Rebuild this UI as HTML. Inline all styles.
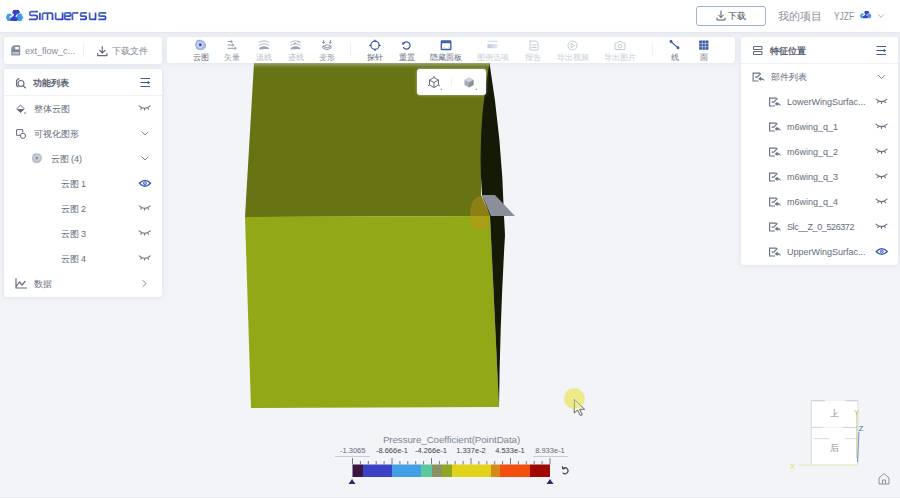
<!DOCTYPE html>
<html><head><meta charset="utf-8">
<style>
*{margin:0;padding:0;box-sizing:border-box}
html,body{width:900px;height:498px;overflow:hidden;background:#f3f4f7;font-family:"Liberation Sans",sans-serif;color:#646b7a}
.a{position:absolute}
.hdr{left:0;top:0;width:900px;height:32px;background:#fff;box-shadow:0 1px 2px rgba(180,190,210,.35)}
.panel{background:#fff;border-radius:3px;box-shadow:0 0 5px 1px rgba(218,224,235,.75)}
.t9{font-size:9px;white-space:nowrap;line-height:10px}
.t8{font-size:8px;white-space:nowrap;line-height:9px}
.b{font-weight:bold;color:#596071}
.sep{height:1px;background:#edf0f4}
svg.a{overflow:visible}
.ic{fill:none;stroke:#646b7a;stroke-width:1;stroke-linecap:round;stroke-linejoin:round}
.dis{color:#c9ced7}
.bl{color:#3d4452}
</style></head><body>

<!-- header -->
<div class="a hdr"></div>
<!-- 3D shape -->
<svg class="a" style="left:0;top:0" width="900" height="498" viewBox="0 0 900 498">
  <polygon points="254,63 490,63 486,100 481,170 481,195 490,216 245,217" fill="#687313"/>
  <polygon points="245,217 490,216 499,407 251,408" fill="#93a816"/>
  <ellipse cx="480" cy="213.5" rx="10" ry="17" fill="#c8901a" fill-opacity="0.4"/>
  <path d="M489.5,63 Q502,140 504,216 L505,235 Q500,320 499,407 L490,216 L482,195 Q477,130 489.5,63 Z" fill="#141a05"/>
  <polygon points="482,195 495,195 515,216 491,216" fill="#8a8f9a"/>
</svg>
<svg class="a" style="left:0;top:0" width="120" height="32" viewBox="0 0 120 32">
  <polygon points="5.9,17.4 7.6,13.8 11,13.8 12.7,17.4 11,21 7.6,21" fill="#3d9ae8"/>
  <polygon points="16.4,17.3 18.1,13.5 21.4,13.5 23.1,17.3 21.4,21 18.1,21" fill="#3d9ae8"/>
  <polygon points="12.2,12.6 13.4,9.9 18.7,9.9 20.1,12.6 18.4,13.6 16.6,14.6 15.4,16.8 17.3,17.6 18,19.2 17,21 11.3,21 10.3,19.2 11.4,17.4 13.2,16.2 14.2,14.2 12.9,13.8" fill="#3940c9"/>
  <polygon points="8.7,17.6 11.3,15 11.9,17.6" fill="#fff"/>
  <defs><linearGradient id="lgS" x1="0" y1="0" x2="1" y2="1"><stop offset="0" stop-color="#4d72b8"/><stop offset="1" stop-color="#2b36d2"/></linearGradient></defs>
  <g fill="none" stroke="url(#lgS)" stroke-width="1.75" stroke-linecap="butt" stroke-linejoin="round">
    <path d="M38,11.6 H31.3 Q29.8,11.6 29.8,13.1 V13.9 Q29.8,15.4 31.3,15.4 H35.8 Q37.3,15.4 37.3,16.9 V17.8 Q37.3,19.3 35.8,19.3 H29"/>
    <path d="M39.9,12.7 V20" stroke="#3848c8"/>
    <path d="M42.5,20 V14.4 Q42.5,13.1 43.8,13.1 H51.2 Q52.5,13.1 52.5,14.4 V20 M47.5,13.1 V20"/>
    <path d="M55.6,12.6 V18 Q55.6,19.3 56.9,19.3 H62.6 V12.6"/>
    <path d="M70.6,16.2 H64.7 M70.6,19.3 H66 Q64.7,19.3 64.7,18 V14.2 Q64.7,12.9 66,12.9 H69.3 Q70.6,12.9 70.6,14.2 V16.2"/>
    <path d="M72.4,20 V14.2 Q72.4,12.9 73.7,12.9 H78.3"/>
    <path d="M86.8,12.9 H81.9 Q80.6,12.9 80.6,14.2 V14.9 Q80.6,16.2 81.9,16.2 H84.9 Q86.2,16.2 86.2,17.5 V18 Q86.2,19.3 84.9,19.3 H80"/>
    <path d="M89.6,12.6 V18 Q89.6,19.3 90.9,19.3 H95.5 V12.6"/>
    <path d="M106.2,12.9 H100.3 Q99,12.9 99,14.2 V14.9 Q99,16.2 100.3,16.2 H104.3 Q105.6,16.2 105.6,17.5 V18 Q105.6,19.3 104.3,19.3 H98.3"/>
  </g>
</svg>
<!-- header right -->
<div class="a" style="left:695.5px;top:6px;width:70.5px;height:19.5px;border:1px solid #9fb0d6;border-radius:3px"></div>
<svg class="a ic" style="left:716px;top:10px;stroke:#4d5462" width="12" height="12" viewBox="0 0 12 12"><path d="M5,1 V7.5 M2.5,5 L5,7.5 L7.5,5 M1,8 V10 H9 V8"/></svg>
<div class="a t9 bl" style="left:728px;top:11px;font-size:9px">下载</div>
<div class="a" style="left:778px;top:10px;font-size:10.5px;white-space:nowrap;color:#8a909c;line-height:12px">我的项目</div>
<div class="a" style="left:833.5px;top:10px;font-size:10.5px;white-space:nowrap;color:#8a909c;line-height:12px;transform:scaleX(0.8);transform-origin:0 0">YJZF</div>
<svg class="a" style="left:0;top:0" width="900" height="32" viewBox="0 0 900 32"><g transform="translate(860,11) scale(0.66) translate(-5.9,-9.9)">
  <polygon points="5.9,17.4 7.6,13.8 11,13.8 12.7,17.4 11,21 7.6,21" fill="#3d9ae8"/>
  <polygon points="16.4,17.3 18.1,13.5 21.4,13.5 23.1,17.3 21.4,21 18.1,21" fill="#3d9ae8"/>
  <polygon points="12.2,12.6 13.4,9.9 18.7,9.9 20.1,12.6 18.4,13.6 16.6,14.6 15.4,16.8 17.3,17.6 18,19.2 17,21 11.3,21 10.3,19.2 11.4,17.4 13.2,16.2 14.2,14.2 12.9,13.8" fill="#3940c9"/>
  <polygon points="8.7,17.6 11.3,15 11.9,17.6" fill="#fff"/>
</g></svg>
<svg class="a ic" style="left:878px;top:14px;stroke:#a9aeb8" width="8" height="5" viewBox="0 0 8 5"><path d="M0.5,0.8 L3,3.3 L5.5,0.8"/></svg>

<!-- left top panel -->
<div class="a panel" style="left:4px;top:37px;width:158px;height:27px"></div>
<svg class="a" style="left:11px;top:45px" width="10" height="11" viewBox="0 0 10 11"><path d="M2.6,0.3 H7.8 Q9.2,0.3 9.2,1.7 V9.3 Q9.2,10.6 7.8,10.6 H1.4 Q0.2,10.6 0.2,9.3 V2.7 Z" fill="#8891a1"/><rect x="4.2" y="2" width="3.6" height="2.4" fill="#fff"/><path d="M1.6,6 H8" stroke="#5f6878" stroke-width="0.9"/><rect x="1.6" y="6.8" width="6.4" height="2.6" fill="#b9c0cb"/></svg>
<div class="a t9" style="left:25px;top:46px;color:#858c98">ext_flow_c...</div>
<div class="a" style="left:82.5px;top:43px;width:1px;height:14px;background:#eef0f3"></div>
<svg class="a ic" style="left:97px;top:46px;stroke:#646b7a;stroke-width:1.2" width="11" height="11" viewBox="0 0 11 11"><path d="M5.3,0.5 V7 M2.6,4.4 L5.3,7 L8,4.4 M0.7,7.5 V9.6 H9.9 V7.5"/></svg>
<div class="a t9" style="left:112px;top:46px;color:#7d8492">下载文件</div>

<!-- left function list panel -->
<div class="a panel" style="left:4px;top:69px;width:158px;height:228px"></div>
<div class="a sep" style="left:4px;top:95px;width:158px"></div>
<svg class="a ic" style="left:15px;top:77px;stroke-width:1.1" width="12" height="12" viewBox="0 0 12 12"><path d="M4,1.5 L1.5,3.5 V8.5 L3,10"/><circle cx="6" cy="6.5" r="3"/><path d="M8.2,8.7 L10.5,11"/></svg>
<div class="a t9 b" style="left:33px;top:78px">功能列表</div>
<svg class="a" style="left:140px;top:77px" width="11" height="11" viewBox="0 0 11 11"><path d="M0.5,1.5 H10 M0.5,9.5 H10" stroke="#4d5b85" stroke-width="1"/><path d="M0.5,5.5 H8.5" stroke="#2f4fb0" stroke-width="1"/><path d="M7.8,3.7 L10.3,5.5 L7.8,7.3 Z" fill="#2f4fb0"/></svg>

<!-- rows -->
<svg class="a" style="left:16px;top:103.5px" width="12" height="12" viewBox="0 0 12 12"><path d="M4.5,1 L8.3,4.8 L4.5,8.6 L0.7,4.8 Z" fill="none" stroke="#646b7a" stroke-width="1"/><path d="M0.9,5 H8.1 L4.5,8.5 Z" fill="#646b7a"/><circle cx="9" cy="9" r="0.8" fill="#646b7a"/></svg>
<div class="a t9" style="left:34px;top:104px">整体云图</div>

<svg class="a ic" style="left:16px;top:129px;stroke-width:1" width="12" height="12" viewBox="0 0 12 12"><path d="M4.5,6.3 H0.6 V0.6 H6.8 V3.2"/><circle cx="7" cy="6.8" r="2.6"/></svg>
<div class="a t9" style="left:34px;top:129px">可视化图形</div>

<svg class="a" style="left:31px;top:152px" width="12" height="12" viewBox="0 0 12 12"><path d="M3,1.8 Q6.5,0.5 9.3,2.3 Q11.5,4.5 10.6,7.8 Q9,11.3 5.6,11.3 Q1.6,11 1.1,7.2 Q0.8,3.2 3,1.8 Z" fill="#b7bfcb"/><path d="M4,4 Q6.5,3 8.2,4.6 Q9,7 7,8.4 Q4.5,9 3.5,7 Q3,5 4,4 Z" fill="none" stroke="#e6eaf0" stroke-width="0.7"/><circle cx="5.8" cy="6.1" r="1.3" fill="#8a94a6"/></svg>
<div class="a t9" style="left:50.5px;top:154px">云图 (4)</div>

<div class="a t9" style="left:60.5px;top:179px">云图 1</div>
<div class="a t9" style="left:60.5px;top:204px">云图 2</div>
<div class="a t9" style="left:60.5px;top:229px">云图 3</div>
<div class="a t9" style="left:60.5px;top:254px">云图 4</div>

<svg class="a ic" style="left:15px;top:278px;stroke-width:1.2" width="12" height="11" viewBox="0 0 12 11"><path d="M1,0.5 V10 H11.5 M1.5,8 L4.5,4 L7,7 L10,3.5"/></svg>
<div class="a t9" style="left:34px;top:279px">数据</div>

<!-- eyes & chevrons left -->
<svg class="a" style="left:0;top:0" width="170" height="300" viewBox="0 0 170 300">
  <defs>
    <g id="eyec"><path d="M0,0 Q5.5,5 11,0 M2.5,2 L1.6,3.4 M5.5,2.6 V4.3 M8.5,2 L9.4,3.4" fill="none" stroke="#6a7386" stroke-width="1.1" stroke-linecap="round"/></g>
    <g id="eyeo"><path d="M0.2,3.5 Q5.75,-2.3 11.3,3.5 Q5.75,9.3 0.2,3.5 Z" fill="none" stroke="#3a5eb5" stroke-width="1.4"/><circle cx="5.75" cy="3.5" r="1.5" fill="none" stroke="#3a5eb5" stroke-width="1"/><circle cx="5.75" cy="3.5" r="0.6" fill="#3a5eb5"/></g>
    <g id="chd"><path d="M0,0 L3,3 L6,0" fill="none" stroke="#7d8492" stroke-width="1" stroke-linecap="round" stroke-linejoin="round"/></g>
  </defs>
  <use href="#eyec" x="139.2" y="105.8"/>
  <use href="#chd" x="142" y="132"/>
  <use href="#chd" x="142" y="157"/>
  <use href="#eyeo" x="139.2" y="179.8"/>
  <use href="#eyec" x="139.2" y="205.8"/>
  <use href="#eyec" x="139.2" y="230.8"/>
  <use href="#eyec" x="139.2" y="255.8"/>
  <path d="M143,280.5 L146,283.5 L143,286.5" fill="none" stroke="#7d8492" stroke-width="1" stroke-linecap="round" stroke-linejoin="round"/>
</svg>

<!-- toolbar -->
<div class="a panel" style="left:167px;top:37px;width:568px;height:26px"></div>
<div class="a" style="left:350px;top:43px;width:1px;height:12px;background:#eef0f3"></div>
<div class="a" style="left:652px;top:43px;width:1px;height:12px;background:#eef0f3"></div>
<div class="a t8" style="left:192.5px;top:52.5px">云图</div>
<div class="a t8" style="left:224px;top:52.5px;color:#9aa0aa">矢量</div>
<div class="a t8 dis" style="left:256px;top:52.5px;color:#b5bac3">流线</div>
<div class="a t8 dis" style="left:287.5px;top:52.5px;color:#b5bac3">迹线</div>
<div class="a t8" style="left:319px;top:52.5px;color:#9aa0aa">变形</div>
<div class="a t8" style="left:367px;top:52.5px">探针</div>
<div class="a t8" style="left:398.5px;top:52.5px">重置</div>
<div class="a t8" style="left:430px;top:52.5px">隐藏面板</div>
<div class="a t8 dis" style="left:477px;top:52.5px">图例选项</div>
<div class="a t8 dis" style="left:525px;top:52.5px">报告</div>
<div class="a t8 dis" style="left:556.5px;top:52.5px">导出视频</div>
<div class="a t8 dis" style="left:604px;top:52.5px">导出图片</div>
<div class="a t8" style="left:670.5px;top:52.5px">线</div>
<div class="a t8" style="left:699.8px;top:52.5px">面</div>

<svg class="a" style="left:0;top:0" width="740" height="70" viewBox="0 0 740 70">
  <!-- 云图 -->
  <path d="M197.5,40.3 Q201,39.5 203.5,41.5 Q206.5,44 205.5,47 Q204,50 200,49.8 Q196,49.5 195.7,46 Q195.3,41.5 197.5,40.3 Z" fill="#a8bbe6" stroke="#7f98d4" stroke-width="0.6"/>
  <path d="M198,42.5 Q201.5,41.5 203,44 Q203.5,47 200.5,47.5 Q197.5,47.5 197.5,45 Z" fill="none" stroke="#e8eef8" stroke-width="0.7"/>
  <circle cx="200.3" cy="44.8" r="1.2" fill="#2a3fc0"/>
  <!-- 矢量 -->
  <g fill="none" stroke="#8e97a8" stroke-width="1" stroke-linecap="round">
    <path d="M228,41.5 H232 M231,40.4 L232.2,41.5 L231,42.6 M228,45 H233.5 M232.4,43.9 L233.6,45 L232.4,46.1 M228,48.3 H236 M234.9,47.2 L236.1,48.3 L234.9,49.4"/>
  </g>
  <!-- 流线 -->
  <g fill="none" stroke="#a9b0be" stroke-width="0.9" stroke-linecap="round">
    <path d="M259,42.3 Q264,39.3 269,42.3 M259,45.3 Q264,42 269,45.3"/>
  </g>
  <path d="M258.8,49.6 Q259.8,46 264.5,46.2 Q268.5,46.6 269.2,49.2 Q264,48.9 258.8,49.6 Z" fill="#9aa3b3"/>
  <!-- 迹线 -->
  <g fill="none" stroke="#a9b0be" stroke-width="0.9" stroke-linecap="round">
    <path d="M290.5,42.3 Q295.5,39.3 300.5,42.3 M290.5,45.3 Q295.5,42 300.5,45.3"/>
  </g>
  <circle cx="295" cy="43.4" r="0.9" fill="#8e97a8"/>
  <circle cx="298.8" cy="41.8" r="0.8" fill="#8e97a8"/>
  <path d="M290.3,49.6 Q291.3,46 296,46.2 Q300,46.6 300.7,49.2 Q295.5,48.9 290.3,49.6 Z" fill="#9aa3b3"/>
  <!-- 变形 -->
  <g fill="none" stroke="#8e97a8" stroke-width="1" stroke-linecap="round" stroke-linejoin="round">
    <path d="M323.6,40.3 V43.3 M322.5,42.2 L323.6,43.4 L324.7,42.2 M330.4,40.3 V43.3 M329.3,42.2 L330.4,43.4 L331.5,42.2"/>
    <path d="M323,46.3 L327,44.6 L331,46.3 V48 L327,49.8 L323,48 Z M323,46.3 L327,48 L331,46.3"/>
  </g>
  <!-- 探针 -->
  <g fill="none" stroke="#3a58a8" stroke-width="1.2" stroke-linecap="round">
    <circle cx="375" cy="45.3" r="4.1"/>
    <path d="M375,40 V41.2 M375,49.4 V50.6 M369.7,45.3 H370.9 M379.1,45.3 H380.3"/>
  </g>
  <!-- 重置 -->
  <g fill="none" stroke="#3a58a8" stroke-width="1.2" stroke-linecap="round">
    <path d="M403.4,43.6 A3.6,3.6 0 1 1 403.6,47.6"/>
  </g>
  <path d="M402.2,41.8 L405,43.4 L402.6,45.2 Z" fill="#3a58a8"/>
  <!-- 隐藏面板 -->
  <g fill="none" stroke="#3a58a8" stroke-width="1.3">
    <rect x="441.3" y="40.9" width="9.5" height="8.6" rx="0.6"/>
  </g>
  <path d="M441.3,42.2 H450.8" stroke="#3a58a8" stroke-width="2"/>
  <path d="M443,47.3 H445 M448,47.3 H449.3" stroke="#a0b0d8" stroke-width="0.6"/>
  <!-- 图例选项 -->
  <defs><linearGradient id="lg1" x1="0" x2="1"><stop offset="0" stop-color="#b8c6e0"/><stop offset="1" stop-color="#e8ecf3"/></linearGradient></defs>
  <path d="M487.5,41.3 H497.5" stroke="#c5cdd9" stroke-width="0.9"/>
  <rect x="487.5" y="44.2" width="10" height="4" fill="url(#lg1)"/>
  <!-- 报告 -->
  <g fill="none" stroke="#c5cad3" stroke-width="1">
    <path d="M530,41 H536 L538,43 V50 H530 Z M531.5,45 H536.5 M531.5,47.5 H536.5"/>
  </g>
  <!-- 导出视频 -->
  <g fill="none" stroke="#c5cad3" stroke-width="1">
    <circle cx="572.5" cy="45.5" r="4.5"/>
    <path d="M571.2,43.3 L574.4,45.5 L571.2,47.7 Z"/>
  </g>
  <!-- 导出图片 -->
  <g fill="none" stroke="#c5cad3" stroke-width="1">
    <path d="M615,43 H617.5 L618.5,41.5 H621.5 L622.5,43 H625 V49.5 H615 Z"/>
    <circle cx="620" cy="46.2" r="1.8"/>
  </g>
  <!-- 线 -->
  <g stroke="#3a58a8" stroke-width="1.1" fill="#3a58a8">
    <path d="M671,41.5 L678,47.8"/>
    <circle cx="671" cy="41.5" r="0.9"/>
    <circle cx="678" cy="47.8" r="0.9"/>
  </g>
  <!-- 面 -->
  <g>
    <rect x="699.2" y="40.6" width="9.2" height="9.2" rx="0.6" fill="#3a58a8"/>
    <path d="M699.2,43.7 H708.4 M699.2,46.7 H708.4 M702.3,40.6 V49.8 M705.3,40.6 V49.8" stroke="#dfe6f5" stroke-width="0.6"/>
  </g>
</svg>

<!-- right panel -->
<div class="a panel" style="left:741px;top:37px;width:157px;height:228px"></div>
<div class="a sep" style="left:741px;top:63px;width:157px"></div>
<svg class="a ic" style="left:752px;top:45px;stroke-width:1.1" width="12" height="12" viewBox="0 0 12 12"><rect x="1.5" y="1.5" width="8.5" height="3" rx="0.8"/><rect x="1.5" y="6.5" width="8.5" height="3" rx="0.8"/></svg>
<div class="a t9 b" style="left:770px;top:46px">特征位置</div>
<svg class="a" style="left:876px;top:45px" width="11" height="11" viewBox="0 0 11 11"><path d="M0.5,1.5 H10 M0.5,9.5 H10" stroke="#4d5b85" stroke-width="1"/><path d="M0.5,5.5 H8.5" stroke="#2f4fb0" stroke-width="1"/><path d="M7.8,3.7 L10.3,5.5 L7.8,7.3 Z" fill="#2f4fb0"/></svg>

<svg class="a" style="left:0;top:0" width="900" height="270" viewBox="0 0 900 270">
  <defs>
    <g id="part"><path d="M7.5,0.6 H0.6 V8.5 H6 M2.6,4.6 H4.8 L8.4,0.8" fill="none" stroke="#6a7386" stroke-width="1.15"/><path d="M5.6,6.4 L8.6,4 V5.4 Q11.2,5.4 12,8.6 Q10.6,7 8.6,7.2 V8.6 Z" fill="#6a7386"/></g>
    <g id="eyec2"><path d="M0,0 Q5.5,5 11,0 M2.5,2 L1.6,3.4 M5.5,2.6 V4.3 M8.5,2 L9.4,3.4" fill="none" stroke="#6a7386" stroke-width="1.1" stroke-linecap="round"/></g>
    <g id="eyeo2"><path d="M0.2,3.5 Q5.75,-2.3 11.3,3.5 Q5.75,9.3 0.2,3.5 Z" fill="none" stroke="#3a5eb5" stroke-width="1.4"/><circle cx="5.75" cy="3.5" r="1.5" fill="none" stroke="#3a5eb5" stroke-width="1"/><circle cx="5.75" cy="3.5" r="0.6" fill="#3a5eb5"/></g>
  </defs>
  <use href="#part" x="752.5" y="72.5"/>
  <use href="#part" x="769" y="97.5"/>
  <use href="#part" x="769" y="122.5"/>
  <use href="#part" x="769" y="147.5"/>
  <use href="#part" x="769" y="172.5"/>
  <use href="#part" x="769" y="197.5"/>
  <use href="#part" x="769" y="222.5"/>
  <use href="#part" x="769" y="247.5"/>
  <path d="M878.5,75.5 L881.5,78.5 L884.5,75.5" fill="none" stroke="#7d8492" stroke-width="1" stroke-linecap="round" stroke-linejoin="round"/>
  <use href="#eyec2" x="876" y="99.2"/>
  <use href="#eyec2" x="876" y="124.2"/>
  <use href="#eyec2" x="876" y="149.2"/>
  <use href="#eyec2" x="876" y="174.2"/>
  <use href="#eyec2" x="876" y="199.2"/>
  <use href="#eyec2" x="876" y="224.2"/>
  <use href="#eyeo2" x="876" y="248"/>
</svg>
<div class="a t9" style="left:771px;top:72px">部件列表</div>
<div class="a t9" style="left:787px;top:97px">LowerWingSurfac...</div>
<div class="a t9" style="left:787px;top:122px">m6wing_q_1</div>
<div class="a t9" style="left:787px;top:147px">m6wing_q_2</div>
<div class="a t9" style="left:787px;top:172px">m6wing_q_3</div>
<div class="a t9" style="left:787px;top:197px">m6wing_q_4</div>
<div class="a t9" style="left:787px;top:222px;letter-spacing:-0.4px">Slc__Z_0_526372</div>
<div class="a t9" style="left:787px;top:247px">UpperWingSurfac...</div>

<!-- overlay box -->
<div class="a" style="left:417px;top:69px;width:69px;height:26px;background:#fff;border-radius:3px;box-shadow:0 0 3px rgba(218,224,235,.7)"></div>
<div class="a" style="left:451px;top:77px;width:1px;height:9px;background:#eef0f3"></div>
<svg class="a" style="left:0;top:0" width="500" height="100" viewBox="0 0 500 100">
  <g fill="none" stroke="#646b7a" stroke-width="1">
    <path d="M434,77.5 L438.5,80 V85 L434,87.5 L429.5,85 V80 Z M429.5,80 L434,82.5 L438.5,80 M434,82.5 V87.5"/>
    <path d="M434,76 V77.5 M428,86 L429.5,85 M440,86 L438.5,85"/>
  </g>
  <path d="M442,88 L442,90 L440,90 Z" fill="#a0a6b0"/>
  <path d="M469,77.5 L473.5,80 V85 L469,87.5 L464.5,85 V80 Z" fill="#a4aab4"/>
  <path d="M469,77.5 L473.5,80 L469,82.5 L464.5,80 Z" fill="#d0d4da"/>
  <path d="M469,82.5 L473.5,80 V85 L469,87.5 Z" fill="#8a909c"/>
  <path d="M477,88 L477,90 L475,90 Z" fill="#a0a6b0"/>
</svg>

<!-- colorbar -->
<div class="a" style="left:351.5px;top:434px;width:200px;text-align:center;font-size:9.8px;white-space:nowrap;color:#7d8492;line-height:11px;letter-spacing:-0.1px">Pressure_Coefficient(PointData)</div>
<div class="a t8" style="left:340px;top:446px;font-size:7.5px;color:#646b7a">-1.3065</div>
<div class="a" style="left:335px;top:456px;width:35px;height:1px;background:#c8ccd4"></div>
<div class="a t8" style="left:375px;top:446px;font-size:7.5px;color:#3d4452;width:34px;text-align:center">-8.666e-1</div>
<div class="a t8" style="left:414px;top:446px;font-size:7.5px;color:#3d4452;width:34px;text-align:center">-4.266e-1</div>
<div class="a t8" style="left:454px;top:446px;font-size:7.5px;color:#3d4452;width:34px;text-align:center">1.337e-2</div>
<div class="a t8" style="left:493px;top:446px;font-size:7.5px;color:#3d4452;width:34px;text-align:center">4.533e-1</div>
<div class="a t8" style="left:533px;top:446px;font-size:7.5px;color:#646b7a;width:34px;text-align:center">8.933e-1</div>
<div class="a" style="left:533px;top:456px;width:35px;height:1px;background:#c8ccd4"></div>
<svg class="a" style="left:0;top:0" width="900" height="498" viewBox="0 0 900 498">
  <rect x="352.5" y="464.5" width="10.5" height="12.5" fill="#3b1645"/>
  <rect x="363" y="464.5" width="29" height="12.5" fill="#3b42c6"/>
  <rect x="392" y="464.5" width="29" height="12.5" fill="#429fe6"/>
  <rect x="421" y="464.5" width="11" height="12.5" fill="#5cc69f"/>
  <rect x="432" y="464.5" width="10" height="12.5" fill="#8a9163"/>
  <rect x="442" y="464.5" width="10" height="12.5" fill="#90a625"/>
  <rect x="452" y="464.5" width="39" height="12.5" fill="#e3d21a"/>
  <rect x="491" y="464.5" width="9" height="12.5" fill="#d78a1b"/>
  <rect x="500" y="464.5" width="30" height="12.5" fill="#f24f0f"/>
  <rect x="530" y="464.5" width="20" height="12.5" fill="#9e0a03"/>
  <g stroke="#646b7a" stroke-width="0.9"><line x1="352.5" x2="352.5" y1="458" y2="464.5"/><line x1="360.4" x2="360.4" y1="461" y2="464.5"/><line x1="368.3" x2="368.3" y1="461" y2="464.5"/><line x1="376.2" x2="376.2" y1="461" y2="464.5"/><line x1="384.1" x2="384.1" y1="461" y2="464.5"/><line x1="392.0" x2="392.0" y1="458" y2="464.5"/><line x1="399.9" x2="399.9" y1="461" y2="464.5"/><line x1="407.8" x2="407.8" y1="461" y2="464.5"/><line x1="415.7" x2="415.7" y1="461" y2="464.5"/><line x1="423.6" x2="423.6" y1="461" y2="464.5"/><line x1="431.5" x2="431.5" y1="458" y2="464.5"/><line x1="439.4" x2="439.4" y1="461" y2="464.5"/><line x1="447.3" x2="447.3" y1="461" y2="464.5"/><line x1="455.2" x2="455.2" y1="461" y2="464.5"/><line x1="463.1" x2="463.1" y1="461" y2="464.5"/><line x1="471.0" x2="471.0" y1="458" y2="464.5"/><line x1="478.9" x2="478.9" y1="461" y2="464.5"/><line x1="486.8" x2="486.8" y1="461" y2="464.5"/><line x1="494.7" x2="494.7" y1="461" y2="464.5"/><line x1="502.6" x2="502.6" y1="461" y2="464.5"/><line x1="510.5" x2="510.5" y1="458" y2="464.5"/><line x1="518.4" x2="518.4" y1="461" y2="464.5"/><line x1="526.3" x2="526.3" y1="461" y2="464.5"/><line x1="534.2" x2="534.2" y1="461" y2="464.5"/><line x1="542.1" x2="542.1" y1="461" y2="464.5"/><line x1="550.0" x2="550.0" y1="458" y2="464.5"/></g>
  <path d="M352,479 L355.5,484 L348.5,484 Z" fill="#2b2e6a"/>
  <path d="M550,479 L553.5,484 L546.5,484 Z" fill="#2b2e6a"/>
  <g fill="none" stroke="#3d4452" stroke-width="1.1" stroke-linecap="round">
    <path d="M563.3,468.3 A3,3 0 1 1 563,473"/>
    <path d="M562.5,466.5 V468.6 H564.6"/>
  </g>
</svg>

<!-- cursor -->
<svg class="a" style="left:550px;top:380px" width="45" height="45" viewBox="550 380 45 45">
  <path id="cur" d="M574.3,399.3 V413 L577.5,410 L580.3,415.6 L582.3,414.7 L579.6,409.3 H584.6 Z" fill="#fff" stroke="#6a7080" stroke-width="0.9" stroke-linejoin="round"/>
  <circle cx="574.4" cy="398.6" r="10.5" fill="#ebe985" fill-opacity="0.95"/>
  <path d="M574.3,399.3 V413 L577.5,410 L580.3,415.6 L582.3,414.7 L579.6,409.3 H584.6 Z" fill="none" stroke="#7a8070" stroke-width="0.8" stroke-linejoin="round" stroke-opacity="0.8"/>
</svg>

<!-- orientation cube -->
<svg class="a" style="left:780px;top:390px" width="120" height="108" viewBox="780 390 120 108">
  <rect x="811.3" y="400.7" width="46.7" height="64" fill="#fff"/>
  <g stroke="#d3d7de" stroke-width="0.9" fill="none">
    <path d="M811.3,400.7 V464.6 M858,400.7 V464.6"/>
    <path d="M811.3,400.7 H858" stroke="#eef0f3"/>
    <path d="M811.3,400.7 H825 M845,400.7 H858" stroke="#c3c8d1"/>
    <path d="M811.3,427.4 H823.5 M843,427.4 H858" stroke="#c8cdd5"/>
    <path d="M823.5,427.4 H843" stroke="#eceef2"/>
    <path d="M814,438.7 H830 M845,438.7 H858" stroke="#d3d7de"/>
  </g>
  <text x="834" y="-410" transform="scale(1,-1)" font-size="9" fill="#8a909c" text-anchor="middle" font-family="Liberation Sans">下</text>
  <text x="834" y="451" font-size="9" fill="#8a909c" text-anchor="middle" font-family="Liberation Sans">后</text>
  <path d="M799,465 H858" stroke="#e3e3a8" stroke-width="0.9"/>
  <path d="M856.8,412 V458" stroke="#b8c860" stroke-width="0.8"/>
  <path d="M859,432 L857.5,462" stroke="#5a7ac8" stroke-width="0.8"/>
  <text x="856.5" y="414.5" font-size="7" fill="#b0c040" text-anchor="middle" font-family="Liberation Sans">Y</text>
  <text x="861" y="431" font-size="8" fill="#4a6ac0" text-anchor="middle" font-family="Liberation Sans">Z</text>
  <text x="792.5" y="469" font-size="7.5" fill="#dcdc50" text-anchor="middle" font-family="Liberation Sans">X</text>
  <g fill="none" stroke="#8a909c" stroke-width="1">
    <path d="M879,478 L884,473.5 L889,478 V484 H879 Z M882.5,484 V480 H885.5 V484"/>
  </g>
</svg>

<div class="a" style="left:0;top:497px;width:900px;height:1px;background:#e9ebef"></div>

</body></html>
